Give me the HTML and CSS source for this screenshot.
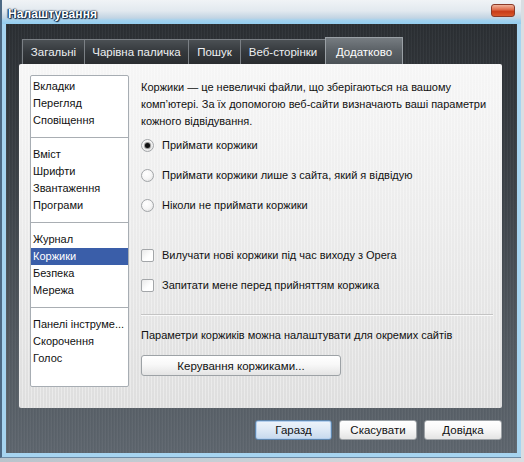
FILE: index.html
```html
<!DOCTYPE html>
<html lang="uk">
<head>
<meta charset="utf-8">
<title>Налаштування</title>
<link rel="stylesheet" href="styles.css">
</head>
<body>
<div class="window">
  <div class="titlebar">
    <span class="title">Налаштування</span>
    <span class="close"></span>
  </div>
  <div class="client">
    <div class="tabs">
      <div class="tab t1">Загальні</div>
      <div class="tab t2">Чарівна паличка</div>
      <div class="tab t3">Пошук</div>
      <div class="tab t4">Веб-сторінки</div>
      <div class="tab t5 active">Додатково</div>
    </div>
    <div class="panel">
      <div class="list">
        <div class="group">
          <div class="item">Вкладки</div>
          <div class="item">Перегляд</div>
          <div class="item">Сповіщення</div>
        </div>
        <div class="sep"></div>
        <div class="group">
          <div class="item">Вміст</div>
          <div class="item">Шрифти</div>
          <div class="item">Звантаження</div>
          <div class="item">Програми</div>
        </div>
        <div class="sep"></div>
        <div class="group">
          <div class="item">Журнал</div>
          <div class="item selected">Коржики</div>
          <div class="item">Безпека</div>
          <div class="item">Мережа</div>
        </div>
        <div class="sep"></div>
        <div class="group">
          <div class="item">Панелі інструме...</div>
          <div class="item">Скорочення</div>
          <div class="item">Голос</div>
        </div>
      </div>
      <div class="content">
        <p class="intro">Коржики — це невеличкі файли, що зберігаються на вашому<br>комп’ютері. За їх допомогою веб-сайти визначають ваші параметри<br>кожного відвідування.</p>
        <div class="options">
          <div class="option"><span class="radio checked"></span><span>Приймати коржики</span></div>
          <div class="option"><span class="radio"></span><span>Приймати коржики лише з сайта, який я відвідую</span></div>
          <div class="option"><span class="radio"></span><span>Ніколи не приймати коржики</span></div>
        </div>
        <div class="options checks">
          <div class="option"><span class="check"></span><span>Вилучати нові коржики під час виходу з Opera</span></div>
          <div class="option"><span class="check"></span><span>Запитати мене перед прийняттям коржика</span></div>
        </div>
        <div class="hr"></div>
        <p class="note">Параметри коржиків можна налаштувати для окремих сайтів</p>
        <div class="btn manage">Керування коржиками...</div>
      </div>
    </div>
    <div class="buttons">
      <div class="btn default b-ok">Гаразд</div>
      <div class="btn b-cancel">Скасувати</div>
      <div class="btn b-help">Довідка</div>
    </div>
  </div>
</div>
</body>
</html>
```
FILE: styles.css
```css
html, body {
  margin: 0;
  padding: 0;
}
body {
  width: 524px;
  height: 462px;
  overflow: hidden;
  background: linear-gradient(90deg, #b9c4cc 0, #d9dee2 100%);
  font-family: "Liberation Sans", Arial, sans-serif;
  font-size: 11px;
  color: #111;
}
.window {
  width: 521px;
  height: 458px;
  box-sizing: border-box;
  background: #a6d4f0;
  border-left: 2px solid #4d6a85;
  border-bottom: 1px solid #6c8aa4;
  display: flex;
  flex-direction: column;
}
.titlebar {
  height: 24px;
  box-sizing: border-box;
  display: flex;
  align-items: flex-start;
  padding: 4px 6px 0 6px;
  background: linear-gradient(#f0f3f6 0, #e2e9ef 45%, #c2d4e3 75%, #a4d2ee 84%, #93cdef 100%);
}
.title {
  font-weight: bold;
  font-size: 12px;
  color: #fff;
  margin-top: 3px;
  letter-spacing: 0.1px;
  text-shadow: 0 0 1px #0b2440, 0 0 2px #0b2440, 1px 1px 1px #0b2440, -1px 0 1px #0b2440;
}
.close {
  margin-left: auto;
  width: 24px;
  height: 13px;
  box-sizing: border-box;
  border: 1px solid #8a3a28;
  border-radius: 3px;
  background: linear-gradient(#f0b49c 0, #e07050 40%, #c93c18 60%, #d8582c 100%);
}
.client {
  flex: 1;
  margin: 0 4px 4px 4px;
  display: flex;
  flex-direction: column;
  padding: 13px 15px 13px 13px;
  background:
    repeating-linear-gradient(90deg, rgba(255,255,255,0.035) 0 1px, rgba(0,0,0,0.03) 1px 2px, transparent 2px 3px),
    linear-gradient(#2b2f33 0, #3e444a 40%, #535a61 75%, #5e666e 100%);
}
.tabs {
  display: flex;
  align-items: flex-end;
  height: 27px;
  margin-left: 3px;
}
.tab {
  box-sizing: border-box;
  height: 25px;
  display: flex;
  align-items: center;
  justify-content: center;
  color: #eef0f2;
  font-size: 11.5px;
  border-top: 1px solid #7b8085;
  border-left: 1px solid #7b8085;
  background: linear-gradient(#4b5054 0, #34383c 50%, #2a2d30 100%);
}
.t1 { width: 62px; }
.t2 { width: 104px; }
.t3 { width: 52px; }
.t4 { width: 85px; }
.t5 { width: 78px; }
.tab.active {
  height: 27px;
  padding-top: 2px;
  border: 1px solid #9aa0a5;
  border-bottom: none;
  color: #fff;
  background: linear-gradient(#767c81 0, #5d6368 45%, #4c5257 100%);
}
.panel {
  flex: 1;
  display: flex;
  box-sizing: border-box;
  padding: 11px 9px 21px 11px;
  gap: 12px;
  border-radius: 2px;
  background:
    repeating-linear-gradient(90deg, rgba(255,255,255,0.35) 0 1px, transparent 1px 3px),
    linear-gradient(#f6f6f6 0, #ececec 45%, #dedede 100%);
}
.list {
  width: 99px;
  box-sizing: border-box;
  background: #fff;
  border: 1px solid #a7adb3;
  border-radius: 2px;
  padding: 2px 0 0 0;
}
.item {
  height: 17px;
  line-height: 17px;
  padding-left: 2px;
  white-space: nowrap;
  overflow: hidden;
  color: #111;
}
.item.selected {
  background: #3a5ea9;
  color: #fff;
}
.sep {
  height: 1px;
  background: #a9aeb3;
  margin: 8px 0;
}
.content {
  flex: 1;
  display: flex;
  flex-direction: column;
  align-items: flex-start;
}
.intro, .note {
  margin: 0;
  line-height: 17px;
  white-space: nowrap;
}
.intro {
  margin-top: 4px;
}
.options {
  display: flex;
  flex-direction: column;
}
.checks {
  margin-top: 20px;
}
.option {
  height: 30px;
  display: flex;
  align-items: center;
  gap: 8px;
}
.radio, .check {
  width: 13px;
  height: 13px;
  box-sizing: border-box;
  border: 1px solid #a3a6a9;
  background: radial-gradient(circle at 40% 35%, #ffffff 0, #f6f6f6 50%, #dadada 100%);
  display: flex;
  align-items: center;
  justify-content: center;
}
.radio {
  border-radius: 50%;
}
.check {
  border-radius: 2px;
  background: linear-gradient(135deg, #e9e9e9 0, #ffffff 60%);
}
.radio.checked::after {
  content: "";
  width: 5px;
  height: 5px;
  border-radius: 50%;
  background: #111;
  box-shadow: 0 0 1px 1px #8a8a8a;
}
.hr {
  align-self: stretch;
  height: 1px;
  background: #c4c4c4;
  border-bottom: 1px solid #fafafa;
  margin-top: 14px;
}
.note {
  margin-top: 11px;
}
.btn {
  box-sizing: border-box;
  height: 21px;
  display: flex;
  align-items: center;
  justify-content: center;
  border: 1px solid #9da2a6;
  border-radius: 3px;
  background: linear-gradient(#ffffff 0, #f8f8f8 45%, #e4e4e4 100%);
  color: #111;
  font-size: 11.5px;
}
.manage {
  width: 200px;
  margin-top: 11px;
}
.buttons {
  display: flex;
  justify-content: flex-end;
  gap: 7px;
  margin-top: 12px;
}
.buttons .btn {
  height: 20px;
}
.b-ok { width: 77px; }
.b-cancel { width: 78px; }
.b-help { width: 78px; }
.btn.default {
  border-color: #5f86ad;
  background: linear-gradient(#eef4fb 0, #dfeaf6 45%, #c6d9ed 100%);
  box-shadow: inset 0 0 0 1px #b5d0ee;
}
```
